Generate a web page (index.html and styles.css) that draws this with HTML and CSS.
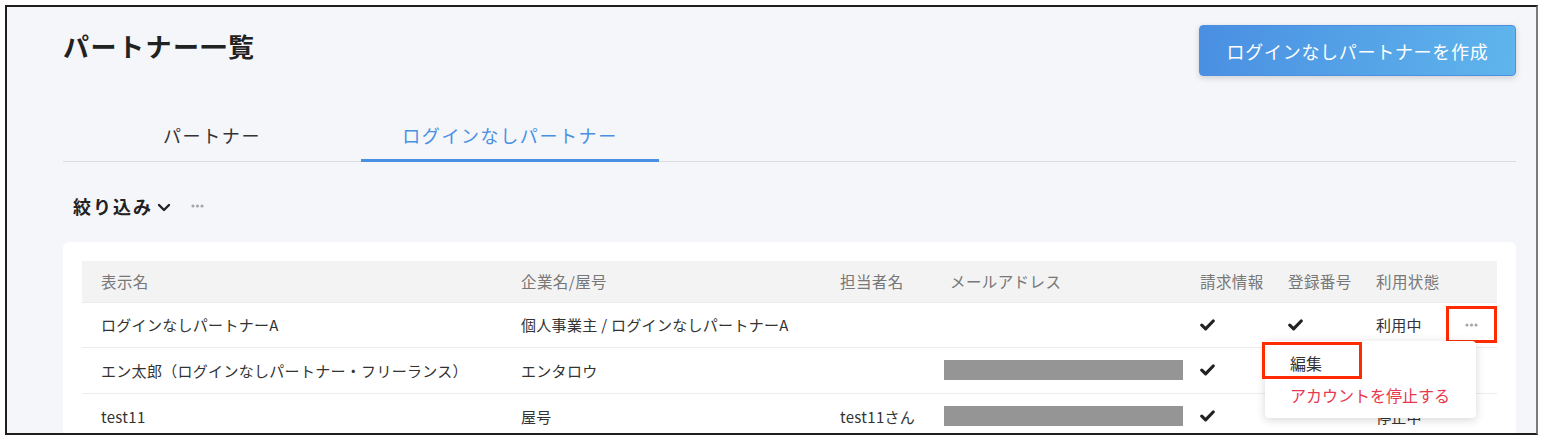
FILE: index.html
```html
<!DOCTYPE html>
<html lang="ja">
<head>
<meta charset="utf-8">
<title>パートナー一覧</title>
<link rel="stylesheet" href="styles.css">
</head>
<body>
<div class="frame">
  <div class="page-head">
    <h1 class="title">パートナー一覧</h1>
    <button class="btn-create">ログインなしパートナーを作成</button>
  </div>

  <div class="tabs">
    <div class="tab">パートナー</div>
    <div class="tab active">ログインなしパートナー</div>
  </div>

  <div class="filter-row">
    <span class="filter-label">絞り込み</span>
    <svg class="chevron" width="14" height="9" viewBox="0 0 14 9"><path d="M2 2 L7 7 L12 2" fill="none" stroke="#222" stroke-width="2.4" stroke-linecap="round" stroke-linejoin="round"/></svg>
    <svg class="dots" width="13" height="4" viewBox="0 0 13 4"><circle cx="2" cy="2" r="1.6"/><circle cx="6.5" cy="2" r="1.6"/><circle cx="11" cy="2" r="1.6"/></svg>
  </div>

  <div class="card">
    <table class="tbl">
      <colgroup>
        <col class="c1"><col class="c2"><col class="c3"><col class="c4"><col class="c5"><col class="c6"><col class="c7"><col class="c8">
      </colgroup>
      <thead>
        <tr>
          <th>表示名</th><th>企業名/屋号</th><th>担当者名</th><th>メールアドレス</th><th>請求情報</th><th>登録番号</th><th>利用状態</th><th></th>
        </tr>
      </thead>
      <tbody>
        <tr>
          <td>ログインなしパートナーA</td>
          <td>個人事業主 / ログインなしパートナーA</td>
          <td></td>
          <td></td>
          <td><svg class="check" width="15" height="12" viewBox="0 0 15 12"><path d="M1.8 6.2 L5.6 9.8 L13.2 2" fill="none" stroke="#222" stroke-width="3.2" stroke-linecap="round" stroke-linejoin="round"/></svg></td>
          <td><svg class="check" width="15" height="12" viewBox="0 0 15 12"><path d="M1.8 6.2 L5.6 9.8 L13.2 2" fill="none" stroke="#222" stroke-width="3.2" stroke-linecap="round" stroke-linejoin="round"/></svg></td>
          <td>利用中</td>
          <td class="act">
            <div class="act-box">
              <svg width="13" height="4" viewBox="0 0 13 4" class="dots"><circle cx="2" cy="2" r="1.6"/><circle cx="6.5" cy="2" r="1.6"/><circle cx="11" cy="2" r="1.6"/></svg>
            </div>
          </td>
        </tr>
        <tr>
          <td>エン太郎（ログインなしパートナー・フリーランス）</td>
          <td>エンタロウ</td>
          <td></td>
          <td><div class="redact"></div></td>
          <td><svg class="check" width="15" height="12" viewBox="0 0 15 12"><path d="M1.8 6.2 L5.6 9.8 L13.2 2" fill="none" stroke="#222" stroke-width="3.2" stroke-linecap="round" stroke-linejoin="round"/></svg></td>
          <td></td>
          <td>利用中</td>
          <td></td>
        </tr>
        <tr>
          <td>test11</td>
          <td>屋号</td>
          <td>test11さん</td>
          <td><div class="redact"></div></td>
          <td><svg class="check" width="15" height="12" viewBox="0 0 15 12"><path d="M1.8 6.2 L5.6 9.8 L13.2 2" fill="none" stroke="#222" stroke-width="3.2" stroke-linecap="round" stroke-linejoin="round"/></svg></td>
          <td></td>
          <td>停止中</td>
          <td></td>
        </tr>
      </tbody>
    </table>

    <div class="menu">
      <div class="menu-item">編集</div>
      <div class="menu-item danger">アカウントを停止する</div>
      <div class="mark"></div>
    </div>
  </div>
</div>
</body>
</html>
```

FILE: styles.css
```css
* { box-sizing: border-box; }
html, body {
  margin: 0;
  padding: 0;
  background: #ffffff;
  font-family: "Noto Sans CJK JP", "Noto Sans", sans-serif;
  color: #333;
}
.frame {
  margin: 5px 0 0 5px;
  width: 1533px;
  height: 430px;
  border: 2px solid #1e1e1e;
  border-right: 2px solid #7a7a7a;
  background: #f5f6fa;
  overflow: hidden;
  padding: 18px 20px 0 56px;
}
.page-head {
  display: flex;
  justify-content: space-between;
  align-items: flex-start;
  height: 51px;
}
.title {
  margin: 2px 0 0 0;
  font-size: 26px;
  line-height: 38px;
  font-weight: 700;
  letter-spacing: 1.5px;
  color: #222;
}
.btn-create {
  width: 317px;
  height: 51px;
  border: 1px solid #4d8fe0;
  border-radius: 4px;
  background: linear-gradient(100deg, #4a8fe2 0%, #5fb5ec 100%);
  box-shadow: 0 2px 6px rgba(0, 0, 0, 0.16);
  color: #fff;
  font-family: inherit;
  font-size: 18px;
  letter-spacing: 0.7px;
  padding: 0;
}
.tabs {
  margin-top: 29px;
  display: flex;
  border-bottom: 1px solid #d9dbe0;
}
.tab {
  width: 298px;
  height: 57px;
  padding-top: 6px;
  margin-bottom: -1px;
  display: flex;
  align-items: center;
  justify-content: center;
  font-size: 18px;
  letter-spacing: 1.6px;
  color: #333;
  border-bottom: 3px solid transparent;
}
.tab.active {
  color: #4a90e2;
  border-bottom-color: #4a90e2;
}
.filter-row {
  margin-top: 28px;
  height: 32px;
  display: flex;
  align-items: center;
  padding-left: 10px;
}
.filter-label {
  font-size: 18px;
  font-weight: 700;
  letter-spacing: 2px;
  color: #222;
}
.chevron { margin-left: 4px; margin-top: 2px; }
.dots { fill: #a6a6a6; }
.filter-row .dots { margin-left: 20px; }
.card {
  position: relative;
  margin-top: 20px;
  background: #fff;
  border-radius: 6px 6px 0 0;
  padding: 19px 19px 0 19px;
  height: 300px;
}
.tbl {
  width: 1415px;
  table-layout: fixed;
  border-collapse: collapse;
}
.c1 { width: 420px; }
.c2 { width: 319px; }
.c3 { width: 110px; }
.c4 { width: 250px; }
.c5 { width: 88px; }
.c6 { width: 88px; }
.c7 { width: 89px; }
.c8 { width: 51px; }
.tbl th {
  background: #f3f3f3;
  height: 41px;
  padding: 0 0 0 19px;
  text-align: left;
  font-weight: 400;
  font-size: 15.5px;
  letter-spacing: 0.4px;
  color: #777;
  white-space: nowrap;
  border-bottom: 1px solid #ececec;
}
.tbl td {
  height: 46px;
  padding: 0 0 0 19px;
  font-size: 15px;
  letter-spacing: 0.3px;
  color: #333;
  border-bottom: 1px solid #ececec;
  white-space: nowrap;
  vertical-align: middle;
}
.tbl tbody tr:first-child td { height: 45px; }
.check { display: block; }
.redact {
  margin-left: -6px;
  width: 239px;
  height: 20px;
  background: #959595;
}
.tbl td.act { padding: 0; }
.act-box {
  width: 51px;
  height: 37px;
  border: 3px solid #ff2a00;
  display: flex;
  align-items: center;
  justify-content: center;
}
.menu {
  position: absolute;
  left: 1202px;
  top: 99px;
  width: 211px;
  height: 77px;
  padding-top: 6px;
  background: #fff;
  border-radius: 4px;
  box-shadow: 0 2px 10px rgba(0, 0, 0, 0.16);
}
.menu-item {
  height: 32px;
  line-height: 32px;
  padding-left: 25px;
  font-size: 16px;
  color: #333;
  white-space: nowrap;
}
.menu-item.danger { color: #e8384f; }
.mark {
  position: absolute;
  left: -3px;
  top: 1px;
  width: 100px;
  height: 37px;
  border: 3px solid #ff2a00;
}
```
